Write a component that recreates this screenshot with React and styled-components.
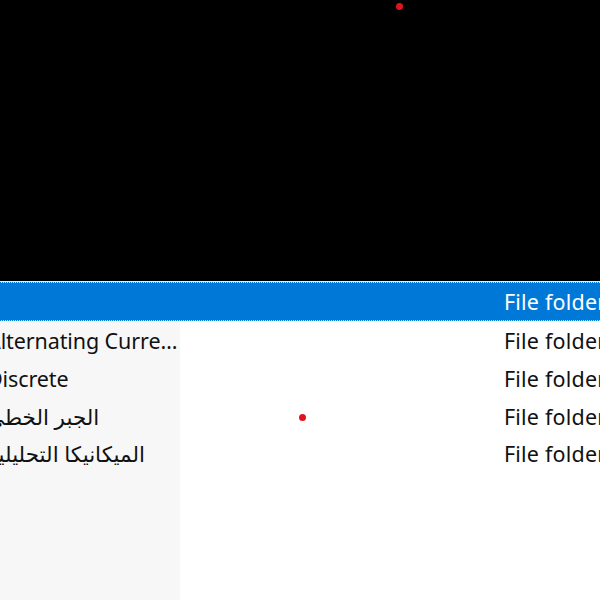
import React from 'react'
import styled, { createGlobalStyle } from 'styled-components'

const GlobalStyle = createGlobalStyle`
  html, body {
    margin: 0;
    padding: 0;
    height: 600px;
    overflow: hidden;
    background: #ffffff;
  }
  body {
    font-family: 'Noto Sans', 'DejaVu Sans', sans-serif;
  }
`

const Screen = styled.div`
  position: relative;
  width: 600px;
  height: 600px;
  display: flex;
  flex-direction: column;
  overflow: hidden;
`

const Preview = styled.div`
  height: 281px;
  background: #000000;
  border-bottom: 1px solid #e8e8e8;
`

const ListView = styled.div`
  flex: 1;
  overflow: hidden;
  background: linear-gradient(to right, #f7f7f7 180px, #ffffff 180px);
`

const Rows = styled.div`
  margin-left: -13px;
  width: 613px;
  display: flex;
  flex-direction: column;
`

const Row = styled.div`
  display: grid;
  grid-template-columns: 193px 324px 1fr;
  align-items: center;
  height: ${p => (p.selected ? '37px' : '37.7px')};
  font-size: 21.5px;
  color: ${p => (p.selected ? '#ffffff' : '#111111')};
  background: ${p => (p.selected ? '#0078d7' : 'transparent')};
  border-top: ${p => (p.selected ? '1px dotted #c8dcf2' : 'none')};
  border-bottom: ${p => (p.selected ? '1px dotted #c8dcf2' : 'none')};
  margin-bottom: ${p => (p.selected ? '1px' : '0')};
`

const NameCell = styled.div`
  white-space: nowrap;
  overflow: hidden;
  text-overflow: ellipsis;
  letter-spacing: -0.1px;
`

const EmptyCell = styled.div``

const TypeCell = styled.div`
  white-space: nowrap;
  overflow: hidden;
  letter-spacing: 0.2px;
`

const Dot = styled.span`
  position: absolute;
  width: 7px;
  height: 7px;
  border-radius: 50%;
  background: #e0141e;
`

const items = [
  { name: '', type: 'File folder', selected: true },
  { name: 'Alternating Current Circuits', type: 'File folder' },
  { name: 'Discrete', type: 'File folder' },
  { name: 'الجبر الخطي', type: 'File folder' },
  { name: 'الميكانيكا التحليلية', type: 'File folder' },
]

export default function App() {
  return (
    <Screen>
      <GlobalStyle />
      <Preview />
      <ListView>
        <Rows>
          {items.map((it, i) => (
            <Row key={i} selected={it.selected}>
              <NameCell>{it.name}</NameCell>
              <EmptyCell />
              <TypeCell>{it.type}</TypeCell>
            </Row>
          ))}
        </Rows>
      </ListView>
      <Dot style={{ left: 396, top: 3 }} />
      <Dot style={{ left: 299, top: 414 }} />
    </Screen>
  )
}
